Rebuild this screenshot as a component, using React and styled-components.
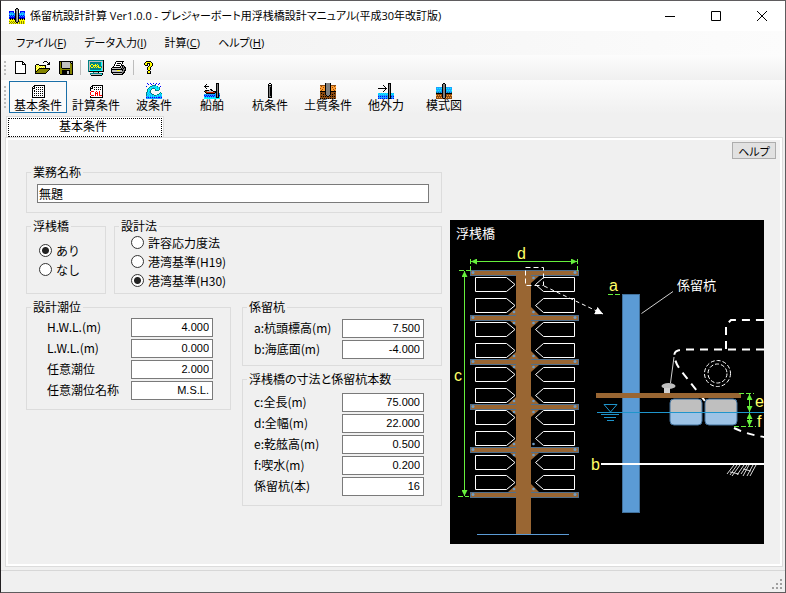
import React from "react"
import styled, { createGlobalStyle, css } from "styled-components"

const GlobalStyle = createGlobalStyle`
  * {
    box-sizing: border-box;
  }
  body {
    margin: 0;
    color: #000;
    background: #f0f0f0;
    font-family: "Noto Sans CJK JP", sans-serif;
    font-size: 12px;
    line-height: 12px;
  }
  button,
  input {
    font: inherit;
    color: inherit;
  }
`

const Window = styled.div`
  display: flex;
  flex-direction: column;
  min-height: 100vh;
  border: 1px solid #5f5c5e;
  border-left-color: #221f21;
`

const TitleBar = styled.header`
  display: flex;
  align-items: center;
  height: 30px;
  padding-left: 8px;
  gap: 5px;
  background: #fff;
`

const Title = styled.h1`
  flex: 1;
  margin: 0;
  font-family: "Open Sans", "Noto Sans CJK JP", sans-serif;
  font-size: 11px;
  font-weight: normal;
  line-height: 16px;
  font-feature-settings: "palt";
  white-space: nowrap;
`

const WindowControls = styled.div`
  display: flex;
`

const WindowButton = styled.button`
  display: flex;
  align-items: center;
  justify-content: center;
  width: 46px;
  height: 30px;
  padding: 0;
  border: 0;
  background: none;
`

const MenuBar = styled.nav`
  display: flex;
  align-items: center;
  height: 24px;
  padding-left: 6px;
  background: linear-gradient(90deg, #f0f0f0, #fcfcfc);
`

const MenuItem = styled.button`
  padding: 0 9px;
  border: 0;
  background: none;
  font-family: "Open Sans", "Noto Sans CJK JP", sans-serif;
  font-size: 11px;
  line-height: 20px;
  font-feature-settings: "palt";
  white-space: nowrap;
`

const ToolStrip = styled.div`
  display: flex;
  align-items: center;
  height: ${props => (props.$large ? "34px" : "25px")};
  padding-left: 3px;
  background: linear-gradient(#fcfcfc, #f0f0f0);
`

const Grip = styled.span`
  width: 2px;
  height: ${props => (props.$large ? "22px" : "14px")};
  margin-right: ${props => (props.$large ? "3px" : "2px")};
  background: repeating-linear-gradient(#bcbcbc 0 2px, transparent 2px 4px);
`

const ToolButton = styled.button`
  display: flex;
  align-items: center;
  justify-content: center;
  width: 23px;
  height: 22px;
  padding: 0;
  border: 0;
  background: none;
`

const Separator = styled.span`
  width: 1px;
  height: 15px;
  margin: 0 3px;
  background: #bdbdbd;
`

const SectionButton = styled.button`
  display: flex;
  flex-direction: column;
  align-items: center;
  width: 58px;
  height: 32px;
  padding: 1px 0;
  border: 1px solid ${props => (props.$active ? "#1a6fa8" : "transparent")};
  background: ${props => (props.$active ? "#fafafa" : "none")};
  white-space: nowrap;
`

const TabList = styled.div`
  display: flex;
  padding: 2px 5px 0;
`

const Tab = styled.button`
  width: 158px;
  height: 21px;
  padding: 1px;
  border: 1px solid #dcdcdc;
  border-bottom: 0;
  background: #fff;
  span {
    display: block;
    border: 1px dotted #000;
    padding: 0 4px 3px 0;
    line-height: 14px;
  }
`

const Page = styled.main`
  flex: 1;
  margin: 0 2px 3px 4px;
  padding: 4px 6px 18px 17px;
  border: 1px solid #dcdcdc;
  box-shadow: inset 0 0 0 2px #fff;
`

const PageHeader = styled.div`
  display: flex;
  justify-content: flex-end;
`

const HelpButton = styled.button`
  width: 44px;
  height: 17px;
  padding: 0;
  border: 1px solid #adadad;
  background: #e1e1e1;
  font-size: 11px;
  font-feature-settings: "palt";
`

const Body = styled.div`
  display: grid;
  grid-template-columns: 416fr 314fr;
  gap: 8px;
  padding: 7px 12px 0 3px;
`

const Form = styled.form`
  display: flex;
  flex-direction: column;
  gap: 7px;
`

const Columns = styled.div`
  display: grid;
  grid-template-columns: ${props => props.$columns};
  gap: ${props => props.$gap};
  align-items: ${props => props.$align || "stretch"};
`

const Stack = styled.div`
  display: flex;
  flex-direction: column;
  gap: 7px;
`

const GroupBox = styled.fieldset`
  min-width: 0;
  margin: 0;
  padding: 0;
  border: 1px solid #dcdcdc;
`

const Legend = styled.legend`
  margin-left: 4px;
  padding: 0 2px;
  line-height: 12px;
  font-feature-settings: "palt";
  white-space: nowrap;
`

const GroupBody = styled.div`
  padding: ${props => props.$pad};
`

const box = css`
  height: 19px;
  border: 1px solid #7a7a7a;
  border-radius: 0;
  background: #fff;
  outline: 0;
`

const NameInput = styled.input`
  ${box};
  display: block;
  width: 100%;
  padding: 0 1px 1px;
`

const ValueInput = styled.input`
  ${box};
  width: 82px;
  padding: 0 3px 1px;
  font-family: "Liberation Sans", "Noto Sans CJK JP", sans-serif;
  font-size: 11px;
  text-align: right;
`

const Rows = styled.div`
  display: flex;
  flex-direction: column;
  gap: 2px;
`

const Row = styled.label`
  display: flex;
  align-items: center;
  justify-content: space-between;
  white-space: nowrap;
  span {
    padding-bottom: 2px;
  }
`

const RadioRow = styled.label`
  display: flex;
  align-items: center;
  gap: 4px;
  height: 19px;
  white-space: nowrap;
`

const Radio = styled.input`
  appearance: none;
  width: 13px;
  height: 13px;
  margin: 0;
  border: 1px solid #333;
  border-radius: 50%;
  background: #fff;
  &:checked {
    background: radial-gradient(circle, #222 0 3px, #fff 4px);
  }
`

const Figure = styled.figure`
  margin: 0;
  padding-top: 54px;
  svg {
    display: block;
    width: 100%;
    font-family: "Noto Sans CJK JP", sans-serif;
  }
`

const StatusBar = styled.footer`
  display: flex;
  align-items: flex-end;
  justify-content: flex-end;
  height: 22px;
  padding: 2px;
  border-top: 1px solid #d7d7d7;
`

// one letter per pixel in the icon rows below
const palette = {
  k: "#000000",
  w: "#ffffff",
  g: "#808080",
  s: "#c0c0c0",
  y: "#ffff00",
  l: "#ffff9c",
  o: "#848400",
  c: "#00ffff",
  t: "#008284",
  b: "#0000ff",
  a: "#1ba0ff",
  r: "#ff0000",
  n: "#8c4a10",
  m: "#ff9c31",
}

const icons = {
  app: [
    ".......kk.......",
    "......kggk......",
    "......kssk......",
    "bbbbb.kgsk.bbbbb",
    "baaab.kgsk.baaab",
    "aaaaaakgskaaaaaa",
    "acacaakgskacacaa",
    "bababakgskbababa",
    "abababkgskababab",
    "bbbbbbkgskbbbbbb",
    "bkbkbkkgskbkbkbk",
    "ykykykkgskykykyk",
    "yyyyyykgskyyyyyy",
    "oyoyoykggkoyoyoy",
    "yoyoyoykkyoyoyoy",
    "oyoyoyoyoyoyoyoy",
  ],
  file: [
    "................",
    "...kkkkkkkk.....",
    "...kwwwwwwkk....",
    "...kwwwwwwkwk...",
    "...kwwwwwwkkkk..",
    "...kwwwwwwwwwk..",
    "...kwwwwwwwwwk..",
    "...kwwwwwwwwwk..",
    "...kwwwwwwwwwk..",
    "...kwwwwwwwwwk..",
    "...kwwwwwwwwwk..",
    "...kwwwwwwwwwk..",
    "...kwwwwwwwwwk..",
    "...kkkkkkkkkkk..",
    "................",
    "................",
  ],
  open: [
    "................",
    ".........kkk....",
    "........k...k.k.",
    ".............kk.",
    ".kkk........kkk.",
    "klylkkkkkkk.....",
    "kylylylylyk.....",
    "klylylylylk.....",
    "kylykkkkkkkkkkk.",
    "klykooooooooook.",
    "kykooooooooook..",
    "kkooooooooook...",
    "kooooooooook....",
    "kkkkkkkkkkk.....",
    "................",
    "................",
  ],
  save: [
    "................",
    ".kkkkkkkkkkkkkk.",
    ".kokssssssssksk.",
    ".kokssssssssokk.",
    ".kokssssssssook.",
    ".kokssssssssook.",
    ".kokssssssssook.",
    ".kokssssssssook.",
    ".kookkkkkkkkook.",
    ".kooooooooooook.",
    ".kookkkkkkkkook.",
    ".kookkkkksskook.",
    ".kookkkkksskook.",
    ".kookkkkksskook.",
    "..kkkkkkkkkkkkk.",
    "................",
  ],
  calc: [
    "tttttttttttttttk",
    "tssssssssssssssk",
    "tstttttttttttcsk",
    "tstttttttttttcsk",
    "tstyyttytytttcsk",
    "tsyttyyyytyttcsk",
    "tsyttytytyytttsk",
    "tstyytytytyyytsk",
    "tstttttttttttcsk",
    "tstttttttttttcsk",
    "tsccccccccccccsk",
    "tkkkkkkkkkkkkkkk",
    ".....tssssk.....",
    "..ttttttttttttk.",
    "..tssssssssssck.",
    "...kkkkkkkkkkk..",
  ],
  print: [
    "................",
    ".....kkkkkkkk...",
    "....kwwwwwwk....",
    "....kwkkkkwk....",
    "...kwwwwwwk.....",
    "...kwkkkkwkkk...",
    "..kwwwwwwkskgk..",
    ".kkkkkkkkkskgkk.",
    "kssssssssskgkgk.",
    "kkkkkkkkkkkkggk.",
    "ksssssyyysskgkk.",
    "kssssssssssggk..",
    "kkkkkkkkkkkgkk..",
    ".kssssssssskk...",
    "..kkkkkkkkkk....",
    "................",
  ],
  help: [
    "................",
    ".....kkkkk......",
    "....kyyyyyk.....",
    "...kyykkkyyk....",
    "...kyyk.kyyk....",
    "....kkk.kyyk....",
    ".......kyyk.....",
    "......kyyk......",
    "......kyyk......",
    "......kyyk......",
    ".......kk.......",
    "......kyyk......",
    "......kyyk......",
    "......kkkk......",
    "................",
    "................",
  ],
  sheet: [
    "................",
    "................",
    "....kkkkkkkkkkk.",
    "...kkwwwwwwwwwk.",
    "..kwkwkwkwkwkwk.",
    "..kkkwwwwwwwwwk.",
    "..kwwwkwkwkwkwk.",
    "..kwkwwwwwwwwwk.",
    "..kwkwkwkwkwkwk.",
    "..kwwwwwwwwwwwk.",
    "..kwkwkwkwkwkwk.",
    "..kwwwwwwwwwwwk.",
    "..kwkwkwkwkwkwk.",
    "..kwwwwwwwwwwwk.",
    "..kkkkkkkkkkkkk.",
    "................",
  ],
  calcSheet: [
    "................",
    "................",
    "....kkkkkkkkkkk.",
    "...kkwwwwwwwwwk.",
    "..kwkwkwkwkwkwk.",
    "..kkkwwwwwwwwwk.",
    "..kwwwkwkwkwkwk.",
    "..kwwwwwwwwwwwk.",
    "..wrrrwwrwwrwwk.",
    "..rwwwwrwrwrwwk.",
    "..rwwwwrrrwrwwk.",
    "..rwwwwrwrwrwwk.",
    "..wrrrwrwrwrrrk.",
    "..kwwwwwwwwwwwk.",
    "..kkkkkkkkkkkkk.",
    "................",
  ],
  wave: [
    ".b..b..b..b..b..",
    "..b..b...b..b...",
    "......tttt......",
    "b...ttacacct..b.",
    "...tcccacacact..",
    "..tccatttccact..",
    ".tcact...tccct..",
    ".tcct....tttt...",
    ".tcat...........",
    "tacat.........t.",
    "tcacat.......tct",
    "tacacatt...ttcac",
    "tcacacacttacacac",
    "aaacacacacacaaaa",
    "bababababababbab",
    "aaaaaaaaaaaaaaaa",
  ],
  ship: [
    "............kkk.",
    "..k.........kgk.",
    ".k..........kgk.",
    "kkkkk.......kgk.",
    ".k..........kgk.",
    "..k.........kgk.",
    "......kk....kgk.",
    ".kkkksskk...kgk.",
    "knnsssssskkkkgk.",
    ".knrnrnrnrnkkgk.",
    "..kkkkkkkkkakgka",
    "aaaaaaaaaaaakgka",
    "babababababakgkb",
    "abababababaakgka",
    "cacacacacacakkkc",
    "cccccccccccccccc",
  ],
  pile: [
    ".......kk.......",
    "......kwwk......",
    "......kkkk......",
    "......kggk......",
    "......kgkk......",
    "......kgkk......",
    "......kgkk......",
    "......kgkk......",
    "......kgkk......",
    "......kgkk......",
    "......kgkk......",
    "......kgkk......",
    "......kgkk......",
    "......kggk......",
    "......kkkk......",
    "................",
  ],
  soil: [
    ".....kggggk.....",
    ".....kggggk.....",
    "nnnnnkggggknnnnn",
    "mnmmmkggggkmmmnm",
    "mmmnmkggggkmnmmm",
    "nmmmmkggggkmmmmn",
    "mmnmmkggggkmmnmm",
    "mnmmmkggggkmmmnm",
    "kkkkkkggggkkkkkk",
    "nnnnnkggggknnnnn",
    "nknnnkggggknnnkn",
    "nnnknkggggknknnn",
    "nnnnnnkggknnnnnn",
    "nknknknkknknknkn",
    "nnnnnnnnnnnnnnnn",
    "knknknknknknknkn",
  ],
  force: [
    "..........kkk...",
    "..........kgk...",
    ".....k....kgk...",
    "......k...kgk...",
    ".......k..kgk...",
    "kkkkkkkkk.kgk...",
    ".......k..kgk...",
    "......k...kgk...",
    ".....k....kgk...",
    "..........kgk...",
    "cacacacacakgkaca",
    "acacacacackgkcac",
    "aaaaaaaaaakgkaaa",
    "bababababakgkbab",
    "aaaaaaaaaakgkaaa",
    "bababababakkkbab",
  ],
  model: [
    ".......kk.......",
    "......kggk......",
    "......kggk......",
    "......kggk......",
    "aaaaaakggkaaaaaa",
    "acacackggkcacaca",
    "aaaaaakggkaaaaaa",
    "cacacakggkacacac",
    "aaaaaakggkaaaaaa",
    "tatatakggkatatat",
    "kkkkkkkggkkkkkkk",
    "nnnnnnkggknnnnnn",
    "mnmnmnkggknmnmnm",
    "nnnnnnkggknnnnnn",
    "nmnmnmkggkmnmnmn",
    "nnnnnnnkknnnnnnn",
  ],
}

const Icon = ({ name }) => (
  <svg width="16" height="16" viewBox="0 0 16 16" shapeRendering="crispEdges" aria-hidden="true">
    {icons[name].map((row, y) =>
      [...row].map((c, x) =>
        c === "." ? null : <rect key={`${x}-${y}`} x={x} y={y} width="1" height="1" fill={palette[c]} />
      )
    )}
  </svg>
)

const sections = [
  ["sheet", "基本条件"],
  ["calcSheet", "計算条件"],
  ["wave", "波条件"],
  ["ship", "船舶"],
  ["pile", "杭条件"],
  ["soil", "土質条件"],
  ["force", "他外力"],
  ["model", "模式図"],
]

const menus = [
  ["ファイル", "F"],
  ["データ入力", "I"],
  ["計算", "C"],
  ["ヘルプ", "H"],
]

const tides = [
  ["H.W.L.(m)", "4.000"],
  ["L.W.L.(m)", "0.000"],
  ["任意潮位", "2.000"],
  ["任意潮位名称", "M.S.L."],
]

const pileValues = [
  ["a:杭頭標高(m)", "7.500"],
  ["b:海底面(m)", "-4.000"],
]

const sizes = [
  ["c:全長(m)", "75.000"],
  ["d:全幅(m)", "22.000"],
  ["e:乾舷高(m)", "0.500"],
  ["f:喫水(m)", "0.200"],
  ["係留杭(本)", "16"],
]

const Group = ({ title, pad, children }) => (
  <GroupBox>
    <Legend>{title}</Legend>
    <GroupBody $pad={pad}>{children}</GroupBody>
  </GroupBox>
)

const Fields = ({ items }) => (
  <Rows>
    {items.map(([label, value]) => (
      <Row key={label}>
        <span>{label}</span>
        <ValueInput defaultValue={value} />
      </Row>
    ))}
  </Rows>
)

const Choice = ({ name, label, checked }) => (
  <RadioRow>
    <Radio type="radio" name={name} defaultChecked={checked} />
    {label}
  </RadioRow>
)

const beams = [50, 95, 139, 184, 227, 272]
const berths = [57, 78, 102, 123, 147, 168, 190, 211, 235, 255]

const Diagram = () => (
  <svg viewBox="0 0 314 324" role="img" aria-label="浮桟橋">
    <defs>
      <marker id="green" viewBox="0 0 6 6" refX="6" refY="3" markerWidth="6" markerHeight="6" markerUnits="userSpaceOnUse" orient="auto-start-reverse">
        <path d="M0 0L6 3L0 6z" fill="#66f03c" />
      </marker>
      <marker id="white" viewBox="0 0 8 8" refX="8" refY="4" markerWidth="8" markerHeight="8" markerUnits="userSpaceOnUse" orient="auto">
        <path d="M0 0L8 4L0 8z" fill="#fff" />
      </marker>
    </defs>
    <rect width="314" height="324" fill="#000" />

    {/* plan of the floating pier */}
    {beams.map((y, i) => (
      <g key={y}>
        <rect x="20.5" y={y + 0.5} width="108" height="5" fill="#996633" stroke="#506f8c" />
        {i > 0 && <path d={`M58 ${y}L66 ${y - 7}V${y}z`} fill="#996633" />}
        {i > 0 && i !== 4 && <path d={`M89 ${y}L81 ${y - 8}V${y}z`} fill="#996633" />}
        {i > 0 && i < 5 && <path d={`M60 ${y + 6}L66 ${y + 11}V${y + 6}z`} fill="#996633" />}
        {i < 5 && <path d={`M89 ${y + 6}L81 ${y + 13}V${y + 6}z`} fill="#996633" />}
        <g fill="#6f9cc4">
          <circle cx="23" cy={y + 2.5} r="1.5" />
          <circle cx="125" cy={y + 2.5} r="1.5" />
          {i > 0 && <circle cx="64" cy={y - 3} r="1.3" />}
          {i > 0 && <circle cx="83.5" cy={y - 3} r="1.3" />}
          {i > 0 && i < 5 && <circle cx="64" cy={y + 8} r="1.3" />}
          {i < 5 && <circle cx="83.5" cy={y + 8} r="1.3" />}
        </g>
      </g>
    ))}
    <rect x="66" y="51" width="15" height="263" fill="#996633" />
    <path d="M27 314.5H119" stroke="#5b9bd5" />
    <g fill="none" stroke="#fff">
      {berths.map(y => (
        <g key={y}>
          <path d={`M25.5 ${y + 0.5}H56.5L65 ${y + 7.5}L56.5 ${y + 14.5}H25.5z`} />
          <path d={`M124.5 ${y + 0.5}H93.5L85.5 ${y + 7.5}L93.5 ${y + 14.5}H124.5z`} />
        </g>
      ))}
      <rect x="75.5" y="47.5" width="18" height="18" strokeDasharray="5 3" />
      <path d="M94 66L153 94" strokeDasharray="4 3" markerEnd="url(#white)" />
    </g>

    {/* section through the pier and the moored boat */}
    <rect x="172.5" y="74.5" width="17" height="218" fill="#5b9bd5" stroke="#41719c" />
    <path d="M191.5 93.5L223 71.5" stroke="#d0d0d0" />
    <g fill="none" stroke="#fff" strokeWidth="2">
      <path d="M276 129V105L281 100H314" strokeDasharray="8 6" />
      <path d="M314 129.5H236Q225 129.5 224.5 134Q224 142 232 152L255 181" strokeDasharray="8 6" />
      <path d="M284 208Q296 214 314 217" strokeDasharray="8 6" />
      <circle cx="267.5" cy="153.5" r="13" strokeWidth="1" strokeDasharray="4 2" />
      <circle cx="267.5" cy="153.5" r="9.5" strokeWidth="1" strokeDasharray="4 2" />
    </g>
    <path d="M224 137L220.5 163" stroke="#d0d0d0" />
    <ellipse cx="218.5" cy="166" rx="7" ry="3" fill="#bfbfbf" />
    <path d="M214 168H220V174H214z" fill="#d0d0d0" />
    {[220, 255].map(x => (
      <g key={x}>
        <rect x={x} y="179" width="32" height="26" rx="4" fill="#9dc3e6" />
        <path d={`M${x} 193V183Q${x} 179 ${x + 4} 179H${x + 28}Q${x + 32} 179 ${x + 32} 183V193z`} fill="#bfbfbf" />
        <rect x={x} y="179" width="32" height="26" rx="4" fill="none" stroke="#41719c" />
      </g>
    ))}
    <rect x="146" y="173" width="145" height="5" fill="#996633" />
    <g fill="none" stroke="#1f95cc">
      <path d="M147 192.5H314M154 184.5H167L160.5 192z" />
      <path d="M151 194.5H169M154 197.5H166M157 200.5H164" />
    </g>
    <path d="M151 244H314" stroke="#fff" strokeWidth="2" />
    <path d="M284 245L277 254M287 245L280 255M290 245L282 256M294 245L287 255M280 252L289 254M297 245L291 254M299 245L293 256M303 245L297 256M306 245L300 256M293 249L301 251" stroke="#d8d8d8" />

    {/* dimension lines */}
    <g fill="none" stroke="#66f03c">
      <path d="M21 41.5H127" markerStart="url(#green)" markerEnd="url(#green)" />
      <path d="M14.5 51V276" markerStart="url(#green)" markerEnd="url(#green)" />
      <path d="M299.5 174V192" markerStart="url(#green)" markerEnd="url(#green)" />
      <path d="M299.5 193V206" markerStart="url(#green)" markerEnd="url(#green)" />
      <path d="M20.5 39V51M127.5 39V51M9 50.5H20M8 276.5H19M158 74.5H170M289 173.5H304M284 206.5H306" strokeDasharray="5 2" />
    </g>
    <g fill="#ffff66" fontFamily="Liberation Sans, sans-serif" fontSize="16">
      <text x="67" y="39">d</text>
      <text x="4" y="161">c</text>
      <text x="159" y="71">a</text>
      <text x="141" y="250">b</text>
      <text x="305" y="187">e</text>
      <text x="307" y="207">f</text>
    </g>
    <g fill="#fff" fontSize="13">
      <text x="6" y="18">浮桟橋</text>
      <text x="227" y="70">係留杭</text>
    </g>
  </svg>
)

const App = () => (
  <Window>
    <GlobalStyle />
    <TitleBar>
      <Icon name="app" />
      <Title>係留杭設計計算 Ver1.0.0 - プレジャーボート用浮桟橋設計マニュアル(平成30年改訂版)</Title>
      <WindowControls>
        <WindowButton aria-label="最小化">
          <svg width="10" height="10" stroke="#000"><path d="M0 5.5H10" /></svg>
        </WindowButton>
        <WindowButton aria-label="最大化">
          <svg width="10" height="10" stroke="#000" fill="none"><path d="M.5 .5H9.5V9.5H.5z" /></svg>
        </WindowButton>
        <WindowButton aria-label="閉じる">
          <svg width="10" height="10" stroke="#000"><path d="M0 0L10 10M10 0L0 10" /></svg>
        </WindowButton>
      </WindowControls>
    </TitleBar>
    <MenuBar>
      {menus.map(([label, key]) => (
        <MenuItem key={key}>
          {label}(<u>{key}</u>)
        </MenuItem>
      ))}
    </MenuBar>
    <ToolStrip>
      <Grip />
      <ToolButton aria-label="新規作成"><Icon name="file" /></ToolButton>
      <ToolButton aria-label="開く"><Icon name="open" /></ToolButton>
      <ToolButton aria-label="保存"><Icon name="save" /></ToolButton>
      <Separator />
      <ToolButton aria-label="計算"><Icon name="calc" /></ToolButton>
      <ToolButton aria-label="印刷"><Icon name="print" /></ToolButton>
      <Separator />
      <ToolButton aria-label="ヘルプ"><Icon name="help" /></ToolButton>
    </ToolStrip>
    <ToolStrip $large>
      <Grip $large />
      {sections.map(([icon, label], i) => (
        <SectionButton key={icon} $active={i === 0}>
          <Icon name={icon} />
          {label}
        </SectionButton>
      ))}
    </ToolStrip>
    <TabList role="tablist">
      <Tab role="tab" aria-selected="true">
        <span>基本条件</span>
      </Tab>
    </TabList>
    <Page>
      <PageHeader>
        <HelpButton>ヘルプ</HelpButton>
      </PageHeader>
      <Body>
        <Form>
          <Group title="業務名称" pad="6px 12px 9px 10px">
            <NameInput aria-label="業務名称" defaultValue="無題" />
          </Group>
          <Columns $columns="80px 1fr" $gap="8px">
            <Group title="浮桟橋" pad="9px 12px">
              <Choice name="pier" label="あり" checked />
              <Choice name="pier" label="なし" />
            </Group>
            <Group title="設計法" pad="1px 16px 3px">
              <Choice name="method" label="許容応力度法" />
              <Choice name="method" label="港湾基準(H19)" />
              <Choice name="method" label="港湾基準(H30)" checked />
            </Group>
          </Columns>
          <Columns $columns="205fr 200fr" $gap="11px" $align="start">
            <Group title="設計潮位" pad="5px 17px 9px 20px">
              <Fields items={tides} />
            </Group>
            <Stack>
              <Group title="係留杭" pad="6px 17px 6px 11px">
                <Fields items={pileValues} />
              </Group>
              <Group title="浮桟橋の寸法と係留杭本数" pad="8px 17px 9px 11px">
                <Fields items={sizes} />
              </Group>
            </Stack>
          </Columns>
        </Form>
        <Figure>
          <Diagram />
        </Figure>
      </Body>
    </Page>
    <StatusBar>
      <svg width="12" height="12" fill="#a0a0a0" aria-hidden="true">
        <path d="M9 1h2v2h-2zM5 5h2v2H5zM9 5h2v2H9zM1 9h2v2H1zM5 9h2v2H5zM9 9h2v2H9z" />
      </svg>
    </StatusBar>
  </Window>
)

export default App
